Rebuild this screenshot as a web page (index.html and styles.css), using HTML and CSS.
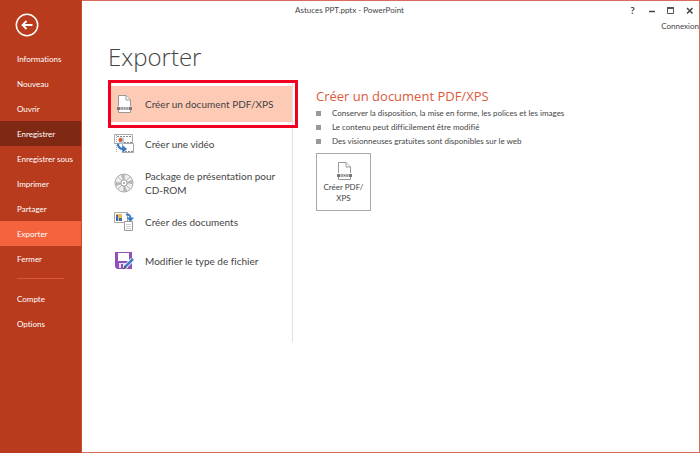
FILE: index.html
```
<!DOCTYPE html>
<html lang="fr">
<head>
    <meta charset="UTF-8">
    <title>Astuces PPT.pptx - PowerPoint</title>
    <link rel="stylesheet" href="styles.css">
</head>
<body>
<svg class="defs" aria-hidden="true">
    <symbol id="icon-pdf" viewBox="0 0 20 20">
        <path d="M4.500 12V1.500h7.500l4.500 4.500v6M4.500 15v3.500h12V15" fill="#fff" stroke="#999"/>
        <path d="M5 2h7l4 4v12H5z" fill="#fff"/>
        <path d="M12 1.500V6h4.500" fill="none" stroke="#999"/>
        <path d="M3 13h15v3H3z" fill="#c4c4c4"/>
        <path d="M3 13h3v3H3zM15 13h3v3h-3z" fill="#777"/>
        <path d="M8 13v3M13 13v3" fill="none" stroke="#888"/>
        <path d="M10 14h1v1h-1z" fill="#666"/>
    </symbol>
</svg>
<div class="backstage">
    <nav class="side">
        <button class="back" aria-label="Retour">
            <svg viewBox="0 0 24 24" fill="none" stroke="#fff">
                <circle cx="12" cy="12" r="10.700" stroke-width="1.500"/>
                <path d="M17.500 12H7.500M11.500 8l-4 4 4 4" stroke-width="1.800"/>
            </svg>
        </button>
        <a href="#">Informations</a>
        <a href="#">Nouveau</a>
        <a href="#">Ouvrir</a>
        <a href="#" class="hover">Enregistrer</a>
        <a href="#">Enregistrer sous</a>
        <a href="#">Imprimer</a>
        <a href="#">Partager</a>
        <a href="#" class="current">Exporter</a>
        <a href="#">Fermer</a>
        <hr>
        <a href="#">Compte</a>
        <a href="#">Options</a>
    </nav>

    <div class="window">
        <header>
            <div class="bar">
                <span class="name">Astuces PPT.pptx - PowerPoint</span>
                <div class="controls">
                    <button aria-label="Aide" class="help">?</button>
                    <button aria-label="Réduire"><svg viewBox="0 0 9 9"><path d="M2 5.500h6" stroke="#444" stroke-width="1.500"/></svg></button>
                    <button aria-label="Agrandir"><svg viewBox="0 0 9 9"><path d="M1.500 1.500h6v6h-6z" fill="none" stroke="#555"/><path d="M1 1h7v2H1z" fill="#555"/></svg></button>
                    <button aria-label="Fermer"><svg viewBox="0 0 9 9"><path d="M2 2l5.500 5.500M7.500 2L2 7.500" stroke="#444" stroke-width="1.500"/></svg></button>
                </div>
            </div>
            <a href="#" class="login">Connexion</a>
        </header>

        <main>
            <h1>Exporter</h1>
            <div class="content">
                <div class="menu">
                    <button class="selected">
                        <svg viewBox="0 0 20 20"><use href="#icon-pdf"/></svg>
                        <span>Créer un document PDF/XPS</span>
                    </button>
                    <button>
                        <svg viewBox="0 0 20 20">
                            <path d="M.500 .500h18v9h-18zM8.500 9.500h11v9h-11z" fill="#fff" stroke="#aaa"/>
                            <path d="M2.500 1v17" stroke="#aaa" stroke-dasharray="1 1"/>
                            <path d="M3 2.500h15M10 8.500h9M11 17.500h8" stroke="#888" stroke-dasharray="2 1" fill="none"/>
                            <path d="M5 3.500h5v6H5z" fill="#b9d0e8"/>
                            <circle cx="6.500" cy="6" r="2" fill="#e2562c"/>
                            <path d="M4 9.500c0 4 2 5.500 5 5.500" fill="none" stroke="#3c7cc4" stroke-width="2.200"/>
                            <path d="M8.500 11l4.500 4-4.500 4z" fill="#3c7cc4"/>
                        </svg>
                        <span>Créer une vidéo</span>
                    </button>
                    <button>
                        <svg viewBox="0 0 20 20">
                            <circle cx="10" cy="10" r="9" fill="#eee" stroke="#aaa"/>
                            <path d="M10 10L7 2l4-.500zM10 10l3 8-4 .500zM10 10l8-3 .500 4zM10 10l-8 3-.500-4z" fill="#b5b5b5"/>
                            <path d="M4 4l12 12M16 4L4 16" stroke="#bbb"/>
                            <circle cx="10" cy="10" r="3.200" fill="#fff" stroke="#999"/>
                            <circle cx="10" cy="10" r="1" fill="#999"/>
                        </svg>
                        <span>Package de présentation pour CD-ROM</span>
                    </button>
                    <button>
                        <svg viewBox="0 0 20 20">
                            <path d="M.500 .500h13v10H.500z" fill="#fff" stroke="#aaa"/>
                            <path d="M2 2h6v7H2z" fill="#f0b65c"/>
                            <path d="M2 3h2v6H2zM5 6h3v3H5z" fill="#3c6fae"/>
                            <path d="M12 2.500c3-.500 4.500 1 4.500 4" fill="none" stroke="#3c7cc4" stroke-width="2"/>
                            <path d="M12.500 5.500h7.500L16.500 10z" fill="#3c7cc4"/>
                            <path d="M10.500 9.500h8v9h-8z" fill="#fff" stroke="#999"/>
                            <path d="M12 12.500h5M12 14.500h5M12 16.500h5" stroke="#ccc"/>
                        </svg>
                        <span>Créer des documents</span>
                    </button>
                    <button>
                        <svg viewBox="0 0 20 20">
                            <path d="M1 1h17v17H3l-2-2z" fill="#8e52ba"/>
                            <path d="M4 2h11v8H4z" fill="#fff"/>
                            <path d="M5 12h9v5H5z" fill="#e9dcf3"/>
                            <path d="M7 13h2v4H7z" fill="#8e52ba"/>
                            <path d="M18.500 8.500l-8 8" stroke="#fff" stroke-width="4"/>
                            <path d="M19 8l-8.500 8.500" stroke="#3c7cc4" stroke-width="2.500"/>
                            <path d="M10.500 14.500l2 2-3.500 2z" fill="#555"/>
                        </svg>
                        <span>Modifier le type de fichier</span>
                    </button>
                </div>

                <section class="detail">
                    <h2>Créer un document PDF/XPS</h2>
                    <ul>
                        <li>Conserver la disposition, la mise en forme, les polices et les images</li>
                        <li>Le contenu peut difficilement être modifié</li>
                        <li>Des visionneuses gratuites sont disponibles sur le web</li>
                    </ul>
                    <button class="create">
                        <svg viewBox="0 0 20 20"><use href="#icon-pdf"/></svg>
                        <span>Créer PDF/<br>XPS</span>
                    </button>
                </section>
            </div>
        </main>
    </div>
</div>
</body>
</html>
```
FILE: styles.css
```
*{
    padding: 0;
    margin: 0;
    box-sizing: border-box;
}
body{
    font: 400 8px/14px Lato, "Open Sans", sans-serif;
    font-variant-ligatures: none;
    color: #444;
    background-color: #fff;
}
a{
    color: inherit;
    text-decoration: none;
}
button{
    font: inherit;
    font-variant-ligatures: none;
    color: inherit;
    border: none;
    background: none;
    cursor: pointer;
}
.defs{
    display: none;
}
.backstage{
    display: flex;
    min-height: 100vh;
}

/* left column */
.side{
    flex: 0 0 82px;
    background-color: #b83b1d;
    border-right: 1px solid #cd4a2c;
    color: #fff;
}
.side a{
    display: block;
    padding: 1px 0 0 17px;
    line-height: 24px;
    white-space: nowrap;
}
.side .hover{
    background-color: #7f2813;
}
.side .current{
    background-color: #f4623e;
}
.side hr{
    margin: 7px 17px;
    border: none;
    border-top: 1px solid #d9563a;
}
.back{
    display: block;
    width: 24px;
    height: 24px;
    margin: 13px 0 9px 15px;
}
.back svg{
    display: block;
}

/* window */
.window{
    flex: 1;
    border: 1px solid #dc6b5c;
    border-left: none;
}
.bar{
    position: relative;
    display: flex;
    justify-content: center;
    height: 18px;
    line-height: 18px;
}
.name{
    margin-right: 82px;
}
.controls{
    position: absolute;
    top: 0;
    right: 5px;
    display: flex;
    gap: 10px;
}
.controls button{
    display: flex;
    align-items: center;
    justify-content: center;
    width: 9px;
    height: 18px;
}
.controls svg{
    width: 9px;
    height: 9px;
}
.controls .help{
    font-size: 10px;
    font-weight: 700;
}
.login{
    display: block;
    text-align: right;
}

main{
    padding: 6px 26px 0;
}
h1{
    font: 300 24px/36px "Open Sans", "Noto Sans", sans-serif;
}
.content{
    display: flex;
    margin-top: 5px;
}
.menu{
    flex: 0 0 185px;
    display: flex;
    flex-direction: column;
    gap: 3px;
    min-height: 262px;
    padding: 6px 0 0 3px;
    border-right: 1px solid #e1e1e1;
}
.menu button{
    position: relative;
    display: flex;
    align-items: center;
    gap: 11px;
    min-height: 36px;
    padding-left: 3px;
    font-size: 10px;
    text-align: left;
}
.menu svg{
    flex: 0 0 20px;
    height: 20px;
}
.menu .selected{
    margin-bottom: 1px;
    background-color: #fdcab5;
}
.selected::after{
    content: "";
    position: absolute;
    top: -6px;
    right: -6px;
    bottom: -6px;
    left: -3px;
    border: 3px solid #f00020;
}
.detail{
    padding: 6px 0 0 23px;
}
h2{
    font: 400 13px/20px "Open Sans", "Noto Sans", sans-serif;
    color: #dc5a3c;
}
ul{
    list-style: none;
}
li{
    display: flex;
    align-items: center;
    gap: 11px;
}
li::before{
    content: "";
    width: 5px;
    height: 5px;
    background-color: #999;
}
.create{
    display: flex;
    flex-direction: column;
    align-items: center;
    gap: 1px;
    width: 55px;
    margin-top: 5px;
    padding: 7px 0 6px;
    border: 1px solid #aaa;
    line-height: 11px;
}
.create svg{
    width: 20px;
    height: 20px;
}
```
